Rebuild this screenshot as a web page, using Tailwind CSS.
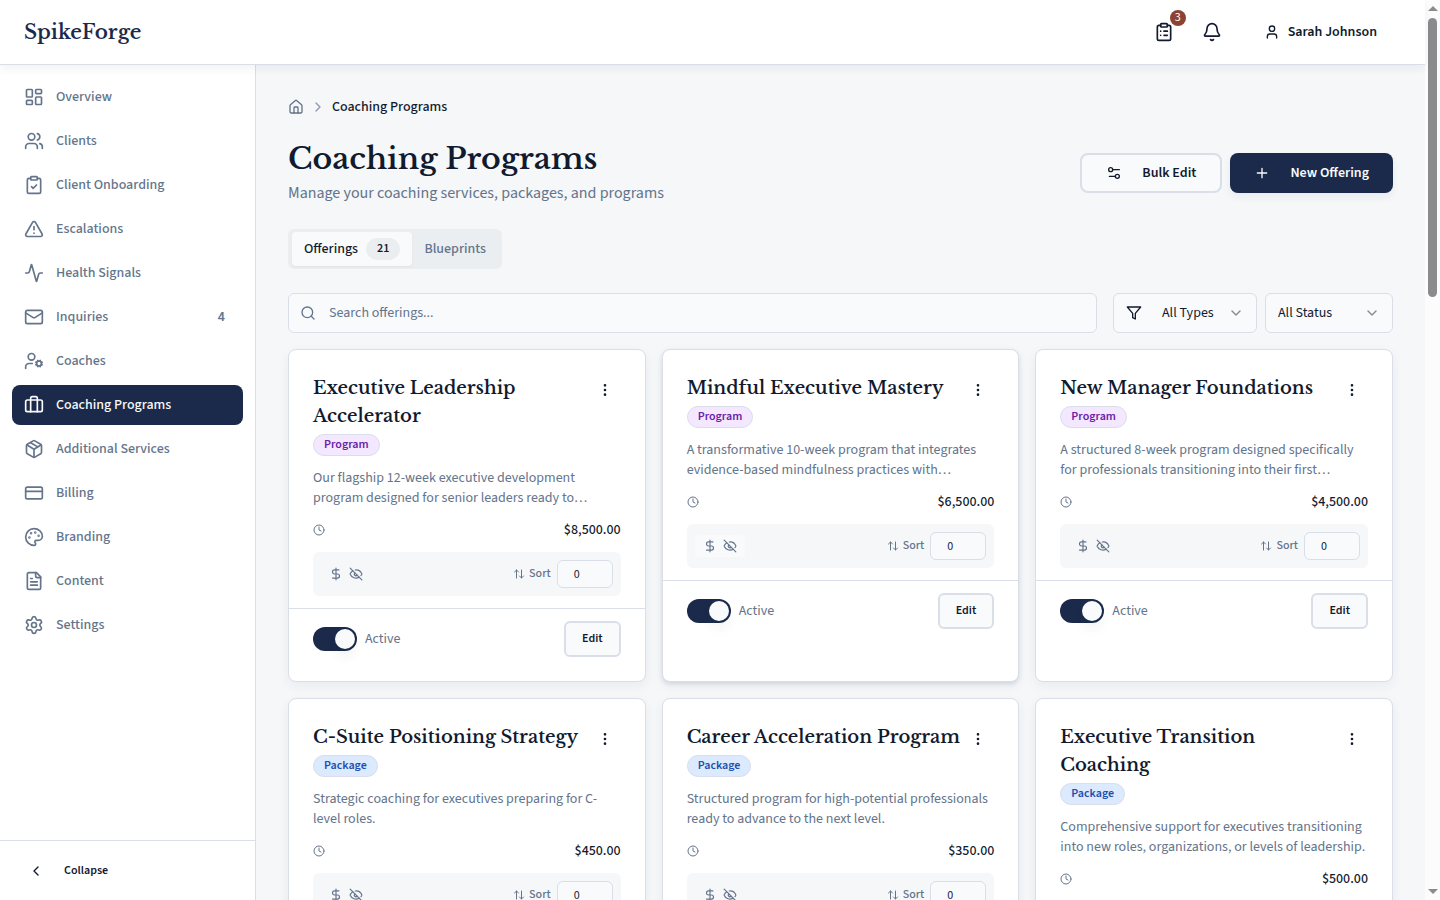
<!DOCTYPE html>
<html lang="en">

<head>
    <meta charset="UTF-8">
    <meta name="viewport" content="width=device-width, initial-scale=1.0">
    <title>Coaching Programs - SpikeForge</title>
    <script src="https://cdn.jsdelivr.net/npm/@tailwindcss/browser@4"></script>
</head>

<body class="flex h-screen overflow-hidden bg-[#f5f7f9] font-['Source_Sans_3','Source_Sans_Pro','Noto_Sans_CJK_SC',sans-serif] text-sm leading-5 text-[#121a2e]">

    <!-- Icon sprite -->
    <svg class="hidden" xmlns="http://www.w3.org/2000/svg">
        <symbol id="overview" viewBox="0 0 24 24"><rect width="7" height="9" x="3" y="3" rx="1"/><rect width="7" height="5" x="14" y="3" rx="1"/><rect width="7" height="9" x="14" y="12" rx="1"/><rect width="7" height="5" x="3" y="16" rx="1"/></symbol>
        <symbol id="users" viewBox="0 0 24 24"><path d="M16 21v-2a4 4 0 0 0-4-4H6a4 4 0 0 0-4 4v2"/><path d="M16 3.128a4 4 0 0 1 0 7.744"/><path d="M22 21v-2a4 4 0 0 0-3-3.87"/><circle cx="9" cy="7" r="4"/></symbol>
        <symbol id="clipboard-check" viewBox="0 0 24 24"><rect width="8" height="4" x="8" y="2" rx="1"/><path d="M16 4h2a2 2 0 0 1 2 2v14a2 2 0 0 1-2 2H6a2 2 0 0 1-2-2V6a2 2 0 0 1 2-2h2"/><path d="m9 14 2 2 4-4"/></symbol>
        <symbol id="clipboard-list" viewBox="0 0 24 24"><rect width="8" height="4" x="8" y="2" rx="1"/><path d="M16 4h2a2 2 0 0 1 2 2v14a2 2 0 0 1-2 2H6a2 2 0 0 1-2-2V6a2 2 0 0 1 2-2h2"/><path d="M12 11h4M12 16h4M8 11h.01M8 16h.01"/></symbol>
        <symbol id="alert" viewBox="0 0 24 24"><path d="m21.73 18-8-14a2 2 0 0 0-3.48 0l-8 14A2 2 0 0 0 4 21h16a2 2 0 0 0 1.73-3"/><path d="M12 9v4M12 17h.01"/></symbol>
        <symbol id="activity" viewBox="0 0 24 24"><path d="M22 12h-2.48a2 2 0 0 0-1.93 1.46l-2.35 8.36a.25.25 0 0 1-.48 0L9.24 2.18a.25.25 0 0 0-.48 0l-2.35 8.36A2 2 0 0 1 4.49 12H2"/></symbol>
        <symbol id="mail" viewBox="0 0 24 24"><rect width="20" height="16" x="2" y="4" rx="2"/><path d="m22 7-8.991 5.727a2 2 0 0 1-2.009 0L2 7"/></symbol>
        <symbol id="user-cog" viewBox="0 0 24 24"><path d="M10 15H6a4 4 0 0 0-4 4v2"/><path d="m14.305 16.53.923-.382M15.228 13.852l-.923-.383M16.852 12.228l-.383-.923M16.852 17.772l-.383.924M19.148 12.228l.383-.923M19.53 18.696l-.382-.924M20.772 13.852l.924-.383M20.772 16.148l.924.383"/><circle cx="18" cy="15" r="3"/><circle cx="9" cy="7" r="4"/></symbol>
        <symbol id="briefcase" viewBox="0 0 24 24"><path d="M16 20V4a2 2 0 0 0-2-2h-4a2 2 0 0 0-2 2v16"/><rect width="20" height="14" x="2" y="6" rx="2"/></symbol>
        <symbol id="package" viewBox="0 0 24 24"><path d="M11 21.73a2 2 0 0 0 2 0l7-4A2 2 0 0 0 21 16V8a2 2 0 0 0-1-1.73l-7-4a2 2 0 0 0-2 0l-7 4A2 2 0 0 0 3 8v8a2 2 0 0 0 1 1.73z"/><path d="M12 22V12"/><path d="m3.3 7 7.703 4.734a2 2 0 0 0 1.994 0L20.7 7"/><path d="m7.5 4.27 9 5.15"/></symbol>
        <symbol id="card" viewBox="0 0 24 24"><rect width="20" height="14" x="2" y="5" rx="2"/><path d="M2 10h20"/></symbol>
        <symbol id="palette" viewBox="0 0 24 24"><path d="M12 22a1 1 0 0 1 0-20 10 9 0 0 1 10 9 5 5 0 0 1-5 5h-2.25a1.75 1.75 0 0 0-1.4 2.8l.3.4a1.75 1.75 0 0 1-1.4 2.8z"/><circle cx="13.5" cy="6.5" r=".5" fill="currentColor"/><circle cx="17.5" cy="10.5" r=".5" fill="currentColor"/><circle cx="6.5" cy="12.5" r=".5" fill="currentColor"/><circle cx="8.5" cy="7.5" r=".5" fill="currentColor"/></symbol>
        <symbol id="file" viewBox="0 0 24 24"><path d="M15 2H6a2 2 0 0 0-2 2v16a2 2 0 0 0 2 2h12a2 2 0 0 0 2-2V7Z"/><path d="M14 2v4a2 2 0 0 0 2 2h4M10 9H8M16 13H8M16 17H8"/></symbol>
        <symbol id="settings" viewBox="0 0 24 24"><path d="M9.671 4.136a2.34 2.34 0 0 1 4.659 0 2.34 2.34 0 0 0 3.319 1.915 2.34 2.34 0 0 1 2.33 4.033 2.34 2.34 0 0 0 0 3.831 2.34 2.34 0 0 1-2.33 4.033 2.34 2.34 0 0 0-3.319 1.915 2.34 2.34 0 0 1-4.659 0 2.34 2.34 0 0 0-3.32-1.915 2.34 2.34 0 0 1-2.33-4.033 2.34 2.34 0 0 0 0-3.831A2.34 2.34 0 0 1 6.35 6.051a2.34 2.34 0 0 0 3.319-1.915"/><circle cx="12" cy="12" r="3"/></symbol>
        <symbol id="bell" viewBox="0 0 24 24"><path d="M10.268 21a2 2 0 0 0 3.464 0"/><path d="M3.262 15.326A1 1 0 0 0 4 17h16a1 1 0 0 0 .74-1.673C19.41 13.956 18 12.499 18 8A6 6 0 0 0 6 8c0 4.499-1.411 5.956-2.738 7.326"/></symbol>
        <symbol id="user" viewBox="0 0 24 24"><path d="M19 21v-2a4 4 0 0 0-4-4H9a4 4 0 0 0-4 4v2"/><circle cx="12" cy="7" r="4"/></symbol>
        <symbol id="home" viewBox="0 0 24 24"><path d="M15 21v-8a1 1 0 0 0-1-1h-4a1 1 0 0 0-1 1v8"/><path d="M3 10a2 2 0 0 1 .709-1.528l7-5.999a2 2 0 0 1 2.582 0l7 5.999A2 2 0 0 1 21 10v9a2 2 0 0 1-2 2H5a2 2 0 0 1-2-2z"/></symbol>
        <symbol id="chevron-right" viewBox="0 0 24 24"><path d="m9 18 6-6-6-6"/></symbol>
        <symbol id="chevron-left" viewBox="0 0 24 24"><path d="m15 18-6-6 6-6"/></symbol>
        <symbol id="chevron-down" viewBox="0 0 24 24"><path d="m6 9 6 6 6-6"/></symbol>
        <symbol id="sliders" viewBox="0 0 24 24"><path d="M20 7h-9M14 17H5"/><circle cx="17" cy="17" r="3"/><circle cx="7" cy="7" r="3"/></symbol>
        <symbol id="plus" viewBox="0 0 24 24"><path d="M5 12h14M12 5v14"/></symbol>
        <symbol id="search" viewBox="0 0 24 24"><path d="m21 21-4.34-4.34"/><circle cx="11" cy="11" r="8"/></symbol>
        <symbol id="filter" viewBox="0 0 24 24"><path d="M22 3H2l8 9.46V19l4 2v-8.54z"/></symbol>
        <symbol id="dots" viewBox="0 0 24 24"><circle cx="12" cy="12" r="1"/><circle cx="12" cy="5" r="1"/><circle cx="12" cy="19" r="1"/></symbol>
        <symbol id="clock" viewBox="0 0 24 24"><circle cx="12" cy="12" r="10"/><path d="M12 6v6l4 2"/></symbol>
        <symbol id="dollar" viewBox="0 0 24 24"><path d="M12 2v20M17 5H9.5a3.5 3.5 0 0 0 0 7h5a3.5 3.5 0 0 1 0 7H6"/></symbol>
        <symbol id="eye-off" viewBox="0 0 24 24"><path d="M10.733 5.076a10.744 10.744 0 0 1 11.205 6.575 1 1 0 0 1 0 .696 10.747 10.747 0 0 1-1.444 2.49"/><path d="M14.084 14.158a3 3 0 0 1-4.242-4.242"/><path d="M17.479 17.499a10.75 10.75 0 0 1-15.417-5.151 1 1 0 0 1 0-.696 10.75 10.75 0 0 1 4.446-5.143"/><path d="m2 2 20 20"/></symbol>
        <symbol id="sort" viewBox="0 0 24 24"><path d="m21 16-4 4-4-4M17 20V4M3 8l4-4 4 4M7 4v16"/></symbol>
    </svg>

    <div class="flex min-w-0 flex-1 flex-col">

        <header class="relative z-10 flex h-[65px] shrink-0 items-center justify-between border-b border-[#d9dee8] bg-white px-6 shadow-[0_4px_8px_rgba(26,50,64,0.06)]">
            <a href="#" class="font-['Libre_Baskerville','Liberation_Serif',serif] text-xl font-semibold text-[#1b2a4a]">SpikeForge</a>
            <div class="flex items-center gap-2">
                <button class="relative flex size-10 items-center justify-center" aria-label="Tasks">
                    <svg class="size-5 fill-none stroke-current stroke-2 [stroke-linecap:round] [stroke-linejoin:round]"><use href="#clipboard-list"/></svg>
                    <span class="absolute -top-[2px] -right-[2px] flex size-4 items-center justify-center rounded-full bg-[#8c4232] text-xs leading-4 text-white">3</span>
                </button>
                <button class="flex size-10 items-center justify-center" aria-label="Notifications">
                    <svg class="size-5 fill-none stroke-current stroke-2 [stroke-linecap:round] [stroke-linejoin:round]"><use href="#bell"/></svg>
                </button>
                <button class="flex h-10 items-center gap-2 px-6 font-semibold">
                    <svg class="size-4 fill-none stroke-current stroke-2 [stroke-linecap:round] [stroke-linejoin:round]"><use href="#user"/></svg>
                    Sarah Johnson
                </button>
            </div>
        </header>

        <div class="flex min-h-0 flex-1">

            <aside class="flex w-64 shrink-0 flex-col justify-between border-r border-[#d9dee8] bg-white">
                <nav id="nav" class="flex flex-col gap-1 p-3"></nav>
                <div class="flex h-[60px] items-center border-t border-[#d9dee8] px-3">
                    <button class="flex h-9 w-full items-center gap-5 px-4 text-xs font-semibold">
                        <svg class="size-4 fill-none stroke-current stroke-2 [stroke-linecap:round] [stroke-linejoin:round]"><use href="#chevron-left"/></svg>
                        Collapse
                    </button>
                </div>
            </aside>

            <main class="min-w-0 flex-1 overflow-hidden p-8">
                <div class="mb-6 flex items-center gap-1.5 font-medium">
                    <a href="#" aria-label="Home" class="text-[#64748b]">
                        <svg class="size-4 fill-none stroke-current stroke-2 [stroke-linecap:round] [stroke-linejoin:round]"><use href="#home"/></svg>
                    </a>
                    <svg class="size-4 fill-none stroke-[#64748b]/70 stroke-2 [stroke-linecap:round] [stroke-linejoin:round]"><use href="#chevron-right"/></svg>
                    <span>Coaching Programs</span>
                </div>

                <div class="mb-6 flex items-center justify-between">
                    <div>
                        <h1 class="font-['Libre_Baskerville','Liberation_Serif',serif] text-3xl leading-9 font-semibold">Coaching Programs</h1>
                        <p class="mt-1 text-base leading-6 text-[#64748b]">Manage your coaching services, packages, and programs</p>
                    </div>
                    <div class="flex gap-2 font-semibold">
                        <button class="flex h-10 items-center gap-5 rounded-lg border-2 border-[#d9dee8] bg-[#f9fafc] px-6">
                            <svg class="size-4 fill-none stroke-current stroke-2 [stroke-linecap:round] [stroke-linejoin:round]"><use href="#sliders"/></svg>
                            Bulk Edit
                        </button>
                        <button class="flex h-10 items-center gap-5 rounded-lg bg-[#1b2a4a] px-6 text-[#f9fafc] shadow-[0_4px_8px_rgba(26,50,64,0.06)]">
                            <svg class="size-4 fill-none stroke-current stroke-2 [stroke-linecap:round] [stroke-linejoin:round]"><use href="#plus"/></svg>
                            New Offering
                        </button>
                    </div>
                </div>

                <div class="mb-6 inline-flex h-10 items-center rounded-md bg-[#ebeef1] p-1 font-medium" role="tablist">
                    <button role="tab" aria-selected="true" class="flex items-center gap-2 rounded-sm bg-[#f9fafc] px-3 py-1.5 shadow-xs">
                        Offerings
                        <span class="rounded-full border border-[#ebeef1] bg-[#ebeef1] px-2.5 text-xs leading-5 font-semibold">21</span>
                    </button>
                    <button role="tab" aria-selected="false" class="px-3 py-1.5 text-[#64748b]">Blueprints</button>
                </div>

                <div class="mb-4 flex gap-4">
                    <label class="relative flex-1">
                        <svg class="absolute top-3 left-3 size-4 fill-none stroke-[#64748b] stroke-2 [stroke-linecap:round] [stroke-linejoin:round]"><use href="#search"/></svg>
                        <input type="text" aria-label="Search offerings" placeholder="Search offerings..." class="block h-10 w-full rounded-md border border-[#d9dee8] bg-[#f9fafc] pr-3 pl-10 placeholder:text-[#64748b]">
                    </label>
                    <div class="flex gap-2">
                        <label class="relative">
                            <svg class="absolute top-3 left-[13px] size-4 fill-none stroke-current stroke-2 [stroke-linecap:round] [stroke-linejoin:round]"><use href="#filter"/></svg>
                            <select aria-label="Type" class="block h-10 w-36 appearance-none rounded-md border border-[#d9dee8] bg-[#f9fafc] pl-12">
                                <option>All Types</option>
                                <option>Program</option>
                                <option>Package</option>
                            </select>
                            <svg class="pointer-events-none absolute top-3 right-[13px] size-4 fill-none stroke-current stroke-2 opacity-50 [stroke-linecap:round] [stroke-linejoin:round]"><use href="#chevron-down"/></svg>
                        </label>
                        <label class="relative">
                            <select aria-label="Status" class="block h-10 w-32 appearance-none rounded-md border border-[#d9dee8] bg-[#f9fafc] pl-3">
                                <option>All Status</option>
                                <option>Active</option>
                                <option>Inactive</option>
                            </select>
                            <svg class="pointer-events-none absolute top-3 right-[13px] size-4 fill-none stroke-current stroke-2 opacity-50 [stroke-linecap:round] [stroke-linejoin:round]"><use href="#chevron-down"/></svg>
                        </label>
                    </div>
                </div>

                <div id="offerings" class="grid grid-cols-3 gap-4"></div>
            </main>
        </div>
    </div>

    <!-- Page scrollbar -->
    <div class="flex w-[15px] shrink-0 flex-col items-center justify-between bg-[#fcfcfc] py-[6px]" aria-hidden="true">
        <div class="flex flex-col items-center gap-[7px]">
            <div class="border-x-[5px] border-b-[5px] border-x-transparent border-b-[#8b8a8d]"></div>
            <div class="h-[279px] w-[9px] rounded-full bg-[#8b8a8d]"></div>
        </div>
        <div class="border-x-[5px] border-t-[5px] border-x-transparent border-t-[#8b8a8d]"></div>
    </div>

    <script>
        const navItems = [
            { label: "Overview", icon: "overview" },
            { label: "Clients", icon: "users" },
            { label: "Client Onboarding", icon: "clipboard-check" },
            { label: "Escalations", icon: "alert" },
            { label: "Health Signals", icon: "activity" },
            { label: "Inquiries", icon: "mail", count: 4 },
            { label: "Coaches", icon: "user-cog" },
            { label: "Coaching Programs", icon: "briefcase", active: true },
            { label: "Additional Services", icon: "package" },
            { label: "Billing", icon: "card" },
            { label: "Branding", icon: "palette" },
            { label: "Content", icon: "file" },
            { label: "Settings", icon: "settings" }
        ];

        const offerings = [
            { title: "Executive Leadership Accelerator", type: "Program", price: "$8,500.00", text: "Our flagship 12-week executive development program designed for senior leaders ready to…" },
            { title: "Mindful Executive Mastery", type: "Program", price: "$6,500.00", text: "A transformative 10-week program that integrates evidence-based mindfulness practices with…", hovered: true },
            { title: "New Manager Foundations", type: "Program", price: "$4,500.00", text: "A structured 8-week program designed specifically for professionals transitioning into their first…" },
            { title: "C-Suite Positioning Strategy", type: "Package", price: "$450.00", text: "Strategic coaching for executives preparing for C-level roles." },
            { title: "Career Acceleration Program", type: "Package", price: "$350.00", text: "Structured program for high-potential professionals ready to advance to the next level." },
            { title: "Executive Transition Coaching", type: "Package", price: "$500.00", text: "Comprehensive support for executives transitioning into new roles, organizations, or levels of leadership." }
        ];

        const badgeColors = {
            Program: "bg-[#f3e8ff] text-[#6b21a8]",
            Package: "bg-[#dbeafe] text-[#1e4fae]"
        };

        const icon = (name, size) => `<svg class="${size} shrink-0 fill-none stroke-current stroke-2 [stroke-linecap:round] [stroke-linejoin:round]"><use href="#${name}"/></svg>`;

        document.getElementById("nav").innerHTML = navItems.map((item) => `
            <a href="#" class="flex h-10 items-center gap-3 rounded-lg px-3 font-medium ${item.active ? "bg-[#1b2a4a] text-[#f9fafc]" : "text-[#64748b]"}">
                ${icon(item.icon, "size-5")}
                <span class="flex-1">${item.label}</span>
                ${item.count ? `<span class="px-1.5 font-semibold">${item.count}</span>` : ""}
            </a>`).join("");

        document.getElementById("offerings").innerHTML = offerings.map((item, i) => `
            <article class="rounded-lg border border-[#d9dee8] bg-white pt-6 pb-6 ${item.hovered ? "shadow-[0_2px_4px_rgba(27,42,74,0.12),0_4px_12px_rgba(26,50,64,0.06)]" : "shadow-[0_4px_12px_rgba(26,50,64,0.06)]"}">
                <div class="flex flex-col gap-3 px-6 pb-3">
                    <div class="flex items-start justify-between">
                        <div class="flex flex-col items-start gap-1">
                            <h3 class="font-['Libre_Baskerville','Liberation_Serif',serif] text-lg leading-7 font-semibold">${item.title}</h3>
                            <span class="rounded-full border border-[#d9dee8] px-2.5 text-xs leading-5 font-semibold ${badgeColors[item.type]}">${item.type}</span>
                        </div>
                        <button class="flex size-8 shrink-0 items-center justify-center" aria-label="More actions">${icon("dots", "size-4")}</button>
                    </div>
                    <p class="text-[#64748b]">${item.text}</p>
                    <div class="flex items-center justify-between">
                        <span class="text-[#64748b]">${icon("clock", "size-3")}</span>
                        <span class="font-medium">${item.price}</span>
                    </div>
                    <div class="flex items-center justify-between rounded-md bg-[#f5f7f9] p-2 text-[#64748b]">
                        <button class="flex items-center gap-1.5 rounded-sm px-2 py-1 ${item.hovered ? "bg-[#f9fafc]" : ""}" aria-label="Price hidden">
                            ${icon("dollar", "size-3.5")}
                            ${icon("eye-off", "size-3.5")}
                        </button>
                        <div class="flex items-center gap-1 text-xs">
                            ${icon("sort", "size-3")}
                            <label for="sort-${i}" class="mr-0.5 font-medium">Sort</label>
                            <input id="sort-${i}" type="text" value="0" class="h-7 w-14 rounded-md border border-[#d9dee8] bg-[#f9fafc] pr-4 text-center text-[#121a2e]">
                        </div>
                    </div>
                </div>
                <div class="flex items-center justify-between border-t border-[#d9dee8] px-6 pt-3">
                    <label class="flex items-center gap-2 text-[#64748b]">
                        <input type="checkbox" role="switch" checked class="peer sr-only">
                        <span class="flex h-6 w-11 items-center justify-end rounded-full bg-[#1b2a4a] p-0.5">
                            <span class="size-5 rounded-full bg-[#f9fafc] shadow-[0_8px_12px_rgba(26,50,64,0.06)]"></span>
                        </span>
                        Active
                    </label>
                    <button class="h-9 rounded-md border-2 border-[#d9dee8] bg-[#f9fafc] px-4 text-xs font-semibold">Edit</button>
                </div>
            </article>`).join("");
    </script>

</body>

</html>
